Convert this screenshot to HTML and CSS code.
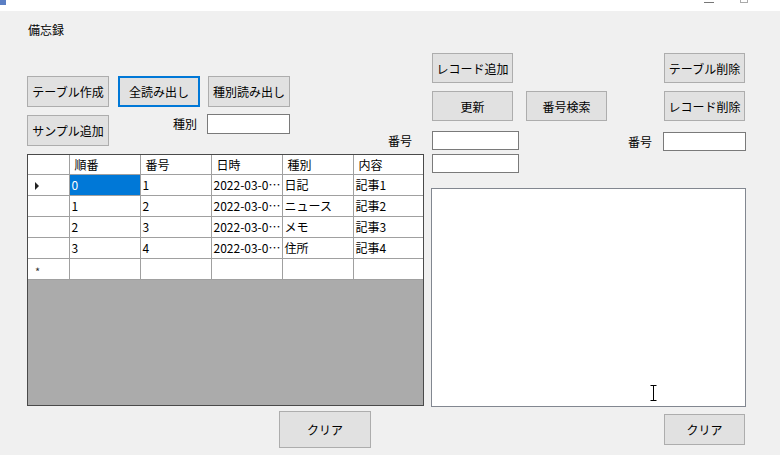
FILE: index.html
```html
<!DOCTYPE html>
<html lang="ja">
<head>
  <meta charset="UTF-8" />
  <title>Form1</title>
  <link rel="stylesheet" href="styles.css">
</head>
<body>
  <div class="titlebar">
    <div class="app-icon"></div>
    <div class="win-controls">
      <span class="win-min"></span>
      <span class="win-max"></span>
    </div>
  </div>

  <div class="form">
    <!-- left side: buttons + data grid -->
    <div class="left-col">
      <div class="form-label">備忘録</div>

      <div class="btn-row first">
        <button class="btn">テーブル作成</button>
        <button class="btn focused">全読み出し</button>
        <button class="btn">種別読み出し</button>
      </div>

      <div class="btn-row second">
        <button class="btn sample">サンプル追加</button>
        <span class="field-label kind-label">種別</span>
        <input class="textbox kind-box" type="text" />
        <span class="field-label num-label">番号</span>
      </div>

      <div class="grid">
        <table>
          <colgroup>
            <col class="c-rowhead" />
            <col class="c-col" />
            <col class="c-col" />
            <col class="c-col" />
            <col class="c-col" />
            <col class="c-last" />
          </colgroup>
          <tr class="head">
            <td class="rowhead"></td>
            <td>順番</td>
            <td>番号</td>
            <td>日時</td>
            <td>種別</td>
            <td>内容</td>
          </tr>
          <tr>
            <td class="rowhead"><span class="current-mark"></span></td>
            <td class="selected">0</td>
            <td>1</td>
            <td>2022-03-0…</td>
            <td>日記</td>
            <td>記事1</td>
          </tr>
          <tr>
            <td class="rowhead"></td>
            <td>1</td>
            <td>2</td>
            <td>2022-03-0…</td>
            <td>ニュース</td>
            <td>記事2</td>
          </tr>
          <tr>
            <td class="rowhead"></td>
            <td>2</td>
            <td>3</td>
            <td>2022-03-0…</td>
            <td>メモ</td>
            <td>記事3</td>
          </tr>
          <tr>
            <td class="rowhead"></td>
            <td>3</td>
            <td>4</td>
            <td>2022-03-0…</td>
            <td>住所</td>
            <td>記事4</td>
          </tr>
          <tr>
            <td class="rowhead"><span class="new-mark">*</span></td>
            <td></td>
            <td></td>
            <td></td>
            <td></td>
            <td></td>
          </tr>
        </table>
      </div>

      <button class="btn clear-left">クリア</button>
    </div>

    <!-- right side: record buttons + memo -->
    <div class="right-col">
      <div class="r-row first">
        <button class="btn">レコード追加</button>
        <button class="btn push-right">テーブル削除</button>
      </div>
      <div class="r-row second">
        <button class="btn">更新</button>
        <button class="btn search">番号検索</button>
        <button class="btn push-right">レコード削除</button>
      </div>
      <div class="r-row third">
        <input class="textbox num-box" type="text" />
        <span class="field-label del-label">番号</span>
        <input class="textbox del-box" type="text" />
      </div>
      <div class="r-row fourth">
        <input class="textbox num-box" type="text" />
      </div>
      <div class="memo">
        <svg class="ibeam" width="7" height="16" viewBox="0 0 7 16">
          <path d="M0.5 0.5h6M3.5 0.5v15M0.5 15.5h6" stroke="#000" stroke-width="1" fill="none"/>
        </svg>
      </div>
      <button class="btn clear-right">クリア</button>
    </div>
  </div>
</body>
</html>
```

FILE: styles.css
```css
/* Base */
* {
  box-sizing: border-box;
  margin: 0;
  padding: 0;
}

body {
  width: 780px;
  height: 455px;
  overflow: hidden;
  background-color: #f0f0f0;
  font-family: "Noto Sans CJK JP", "Noto Sans", sans-serif;
  font-size: 12px;
  color: #000;
}

/* Title bar (cut off at top) */
.titlebar {
  height: 11px;
  background-color: #fff;
  display: flex;
  justify-content: space-between;
  align-items: flex-start;
}

.app-icon {
  width: 6px;
  height: 5px;
  background-color: #5b7fc4;
}

.win-controls {
  display: flex;
  gap: 26px;
  margin-right: 32px;
}

.win-min {
  width: 10px;
  height: 1px;
  margin-top: 2px;
  background-color: #777;
}

.win-max {
  width: 8px;
  height: 3px;
  border: 1px solid #aaa;
  border-top: none;
}

/* Form */
.form {
  display: flex;
  gap: 7px;
  padding-left: 27px;
}

.left-col {
  width: 397px;
  display: flex;
  flex-direction: column;
}

.right-col {
  width: 315px;
  display: flex;
  flex-direction: column;
}

.form-label {
  margin-top: 10px;
  margin-left: 1px;
  line-height: 18px;
}

/* Buttons */
.btn {
  font-family: inherit;
  font-size: 12px;
  color: #000;
  background-color: #e1e1e1;
  border: 1px solid #adadad;
  width: 82px;
  height: 31px;
  flex-shrink: 0;
}

.btn.focused {
  border-color: #0078d7;
  box-shadow: inset 0 0 0 1px #0078d7;
}

.btn-row {
  display: flex;
  align-items: flex-start;
}

.btn-row.first {
  margin-top: 37px;
  gap: 9px;
}

.btn-row.first .btn:last-child {
  margin-left: -1px;
}

.btn-row.second {
  margin-top: 7px;
  height: 32px;
}

.btn.sample {
  margin-top: 1px;
}

.field-label {
  line-height: 16px;
  flex-shrink: 0;
}

.kind-label {
  margin-left: 64px;
  margin-top: 2px;
}

.textbox {
  background-color: #fff;
  border: 1px solid #7a7a7a;
  font-family: inherit;
  font-size: 12px;
  outline: none;
}

.kind-box {
  width: 83px;
  height: 20px;
  margin-left: 10px;
}

.num-label {
  margin-left: auto;
  margin-right: 12px;
  margin-top: 19px;
}

/* Data grid */
.grid {
  margin-top: 8px;
  width: 397px;
  height: 252px;
  border: 1px solid #4a4a4a;
  background-color: #ababab;
}

.grid table {
  border-collapse: collapse;
  table-layout: fixed;
  width: 395px;
  background-color: #fff;
}

.c-rowhead { width: 41px; }
.c-col { width: 71px; }
.c-last { width: 70px; }

.grid td {
  height: 21px;
  padding: 0 2px;
  border-right: 1px solid #a0a0a0;
  border-bottom: 1px solid #a0a0a0;
  white-space: nowrap;
  overflow: hidden;
  line-height: 18px;
  vertical-align: middle;
}

.grid td:last-child {
  border-right: none;
}

.grid tr.head td {
  height: 19px;
  line-height: 17px;
  padding-left: 5px;
}

.grid td.rowhead {
  padding-left: 7px;
}

.grid td.selected {
  background-color: #0078d7;
  color: #fff;
}

.current-mark {
  display: inline-block;
  width: 0;
  height: 0;
  border-top: 4px solid transparent;
  border-bottom: 4px solid transparent;
  border-left: 4px solid #222;
  vertical-align: middle;
}

.new-mark {
  font-size: 11px;
  line-height: 12px;
  color: #333;
  vertical-align: middle;
}

.btn.clear-left {
  margin-top: 5px;
  margin-left: 252px;
  width: 92px;
  height: 37px;
}

/* Right column */
.r-row {
  display: flex;
  align-items: flex-start;
}

.r-row .btn {
  width: 81px;
  height: 30px;
}

.r-row.first {
  margin-top: 42px;
  padding-left: 1px;
}

.r-row.second {
  margin-top: 8px;
  padding-left: 1px;
}

.btn.search {
  margin-left: 13px;
}

.btn.push-right {
  margin-left: auto;
  margin-right: 1px;
}

.r-row.third {
  margin-top: 10px;
  height: 20px;
  padding-left: 1px;
}

.num-box {
  width: 87px;
  height: 19px;
}

.del-label {
  margin-left: 109px;
  margin-top: 3px;
}

.del-box {
  width: 83px;
  height: 19px;
  margin-left: 11px;
  margin-top: 1px;
}

.r-row.fourth {
  margin-top: 3px;
  padding-left: 1px;
}

.memo {
  position: relative;
  margin-top: 15px;
  width: 315px;
  height: 219px;
  background-color: #fff;
  border: 1px solid #828790;
}

.ibeam {
  position: absolute;
  left: 218px;
  top: 196px;
}

.btn.clear-right {
  margin-top: 7px;
  margin-left: 233px;
  width: 81px;
  height: 31px;
}
```
